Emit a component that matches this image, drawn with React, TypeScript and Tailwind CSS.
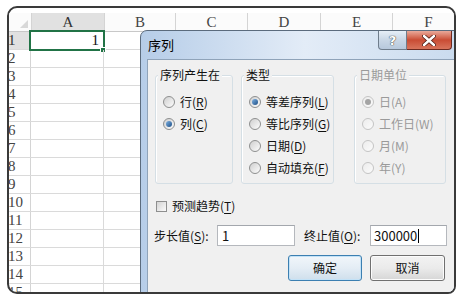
import React from "react";

const colW = ["w-[73px]", "w-[71px]", "w-[72px]", "w-[73px]", "w-[72px]", "w-[72px]"];
const cols = ["A", "B", "C", "D", "E", "F"];

function Radio({ checked, disabled }: { checked?: boolean; disabled?: boolean }) {
  return (
    <span
      className={
        disabled
          ? "flex w-[12px] h-[12px] shrink-0 items-center justify-center rounded-full border border-[#c4c4c4] bg-gradient-to-br from-[#ececec] to-[#fbfbfb]"
          : "flex w-[12px] h-[12px] shrink-0 items-center justify-center rounded-full border border-[#8e8f8f] bg-gradient-to-br from-[#cfcfcf] to-[#fdfdfd]"
      }
    >
      {checked ? (
        <span
          className={
            disabled
              ? "w-[6px] h-[6px] rounded-full bg-[#a4a4a4]"
              : "w-[6px] h-[6px] rounded-full bg-gradient-to-br from-[#7fb2e3] to-[#1c4f86]"
          }
        />
      ) : null}
    </span>
  );
}

function U({ c }: { c: string }) {
  return <span className="underline underline-offset-[2px] decoration-[1px]">{c}</span>;
}

function RadioRow({
  checked,
  disabled,
  children,
}: {
  checked?: boolean;
  disabled?: boolean;
  children: React.ReactNode;
}) {
  return (
    <div className="flex h-[22px] items-center gap-[5px] pl-[7px]">
      <Radio checked={checked} disabled={disabled} />
      <span className={disabled ? "text-[#9a9a9a] leading-[16px]" : "text-[#111] leading-[16px]"}>{children}</span>
    </div>
  );
}

function Group({
  title,
  w,
  disabled,
  children,
}: {
  title: string;
  w: string;
  disabled?: boolean;
  children: React.ReactNode;
}) {
  return (
    <div className={`${w} h-[109px] shrink-0 rounded-[3px] border border-[#d5dfe5] shadow-[inset_1px_1px_0_#ffffff]`}>
      <div
        className={
          disabled
            ? "-mt-[9px] ml-[2px] w-fit px-[2px] bg-[#f0f0f0] leading-[16px] text-[#9a9a9a]"
            : "-mt-[9px] ml-[2px] w-fit px-[2px] bg-[#f0f0f0] leading-[16px] text-[#111]"
        }
      >
        {title}
      </div>
      <div className="mt-[8px]">{children}</div>
    </div>
  );
}

export default function App() {
  const rows = Array.from({ length: 15 }, (_, i) => i + 1);
  return (
    <div className="w-[464px] h-[297px] bg-white pt-[6px] pl-[7px] overflow-hidden">
      <div className="relative w-[449px] h-[288px] border-2 border-[#3a3a3a] rounded-[10px] rounded-br-[8px] overflow-hidden bg-white font-['Liberation_Serif',serif] text-[#444]">
        <div className="h-[5px]" />
        {/* column header */}
        <div className="flex h-[19px] border-b border-[#c8c8c8] bg-[#fbfbfb]">
          <div className="relative w-[23px] shrink-0 border-r border-[#d4d4d4]">
            <svg width="8" height="8" className="absolute right-[3px] bottom-[3px]" viewBox="0 0 8 8">
              <polygon points="8,0 8,8 0,8" fill="#d8d8d8" />
            </svg>
          </div>
          {cols.map((c, i) => (
            <div
              key={c}
              className={`${colW[i]} shrink-0 flex items-center justify-center border-r border-[#d4d4d4] text-[15px] leading-none ${
                i === 0 ? "bg-[#e1e1e1] text-[#333]" : "text-[#444]"
              }`}
            >
              {c}
            </div>
          ))}
        </div>
        {/* rows */}
        {rows.map((r) => (
          <div key={r} className="flex h-[18px] border-b border-[#dadada]">
            <div
              className={`w-[23px] shrink-0 flex items-center -ml-[1px] pl-0 border-r border-[#d4d4d4] text-[15px] leading-none ${
                r === 1 ? "bg-[#e1e1e1] text-[#333]" : "text-[#444]"
              }`}
            >
              {r}
            </div>
            {cols.map((c, i) => (
              <div key={c} className={`${colW[i]} shrink-0 relative border-r border-[#dadada]`}>
                {r === 1 && i === 0 ? (
                  <>
                    <div className="absolute -left-[2px] -top-[2px] w-[76px] h-[21px] border-2 border-[#217346]" />
                    <div className="absolute -right-[3px] -bottom-[4px] w-[6px] h-[6px] bg-[#217346] border border-white" />
                    <div className="flex h-full items-center justify-end pr-[4px] text-[15px] leading-none text-[#111]">1</div>
                  </>
                ) : null}
              </div>
            ))}
          </div>
        ))}

        {/* Dialog */}
        <div className="absolute left-[131px] top-[22px] w-[330px] h-[280px] flex flex-col rounded-t-[7px] border border-[#5b6b7d] bg-gradient-to-r from-[#b6cde8] via-[#e3ecf7] to-[#c8daee] font-['Noto_Sans_CJK_SC',sans-serif] text-[12px] text-[#111]">
          <div className="h-[28px] shrink-0 flex items-start">
            <span className="ml-[7px] mt-[6px] text-[13px] leading-[16px] text-black">序列</span>
            <div className="ml-auto mr-[17px] flex">
              <div className="w-[29px] h-[19px] flex items-center justify-center rounded-bl-[4px] border border-t-0 border-[#6f7d8c] bg-gradient-to-b from-[#e6eef7] via-[#c9d7e6] to-[#b7c8dc] text-[13px] leading-none font-['DejaVu_Sans',sans-serif] font-bold text-white [text-shadow:0_0_1px_#333,0_0_1px_#333]">
                ?
              </div>
              <div className="w-[45px] h-[19px] flex items-center justify-center rounded-br-[4px] border border-l-0 border-t-0 border-[#6d2a20] bg-gradient-to-b from-[#e9a99a] via-[#c94c34] to-[#d8745c]">
                <svg width="14" height="11" viewBox="0 0 14 11">
                  <path d="M2 1 L12 10 M12 1 L2 10" stroke="#4a1a12" strokeWidth="4" strokeLinecap="round" />
                  <path d="M2 1 L12 10 M12 1 L2 10" stroke="#ffffff" strokeWidth="2.4" strokeLinecap="round" />
                </svg>
              </div>
            </div>
          </div>
          <div className="ml-[6px] flex-1 border border-[#8fa3b9] bg-[#f0f0f0]">
            {/* groups */}
            <div className="mt-[15px] pl-[7px] flex items-start">
              <Group title="序列产生在" w="w-[78px]">
                <RadioRow>
                  行(<U c="R" />)
                </RadioRow>
                <RadioRow checked>
                  列(<U c="C" />)
                </RadioRow>
              </Group>
              <div className="ml-[8px]">
                <Group title="类型" w="w-[93px]">
                  <RadioRow checked>
                    等差序列(<U c="L" />)
                  </RadioRow>
                  <RadioRow>
                    等比序列(<U c="G" />)
                  </RadioRow>
                  <RadioRow>
                    日期(<U c="D" />)
                  </RadioRow>
                  <RadioRow>
                    自动填充(<U c="F" />)
                  </RadioRow>
                </Group>
              </div>
              <div className="ml-[20px]">
                <Group title="日期单位" w="w-[92px]" disabled>
                  <RadioRow checked disabled>
                    日(A)
                  </RadioRow>
                  <RadioRow disabled>工作日(W)</RadioRow>
                  <RadioRow disabled>月(M)</RadioRow>
                  <RadioRow disabled>年(Y)</RadioRow>
                </Group>
              </div>
            </div>
            {/* checkbox */}
            <div className="mt-[14px] h-[16px] pl-[8px] flex items-center gap-[5px]">
              <span className="w-[11px] h-[11px] border border-[#8e8f8f] bg-gradient-to-br from-[#d4d4d4] to-[#fbfbfb]" />
              <span className="leading-[16px]">
                预测趋势(<U c="T" />)
              </span>
            </div>
            {/* step row */}
            <div className="mt-[11px] h-[21px] pl-[6px] flex items-center">
              <span className="w-[63px] shrink-0 leading-[16px]">
                步长值(<U c="S" />):
              </span>
              <div className="w-[78px] h-[21px] shrink-0 flex items-center pl-[4px] border border-[#b5b8bd] border-t-[#a3a7ad] bg-white text-[13px] leading-none">
                1
              </div>
              <span className="ml-[9px] w-[66px] shrink-0 leading-[16px]">
                终止值(<U c="O" />):
              </span>
              <div className="w-[77px] h-[21px] shrink-0 flex items-center pl-[3px] border border-[#b5b8bd] border-t-[#a3a7ad] bg-white text-[13px] leading-none">
                300000
                <span className="ml-[1px] w-[1px] h-[14px] bg-black" />
              </div>
            </div>
            {/* buttons */}
            <div className="mt-[9px] pl-[140px] flex gap-[8px]">
              <div className="w-[74px] h-[26px] flex items-center justify-center rounded-[3px] border border-[#3c7fb1] bg-gradient-to-b from-[#f1f6fa] via-[#e4edf5] to-[#cfdfec] shadow-[inset_0_0_0_1px_#c3e2f7]">
                确定
              </div>
              <div className="w-[75px] h-[26px] flex items-center justify-center rounded-[3px] border border-[#707070] bg-gradient-to-b from-[#f2f2f2] via-[#ebebeb] to-[#d6d6d6] shadow-[inset_0_0_0_1px_#fcfcfc]">
                取消
              </div>
            </div>
          </div>
        </div>
      </div>
    </div>
  );
}
